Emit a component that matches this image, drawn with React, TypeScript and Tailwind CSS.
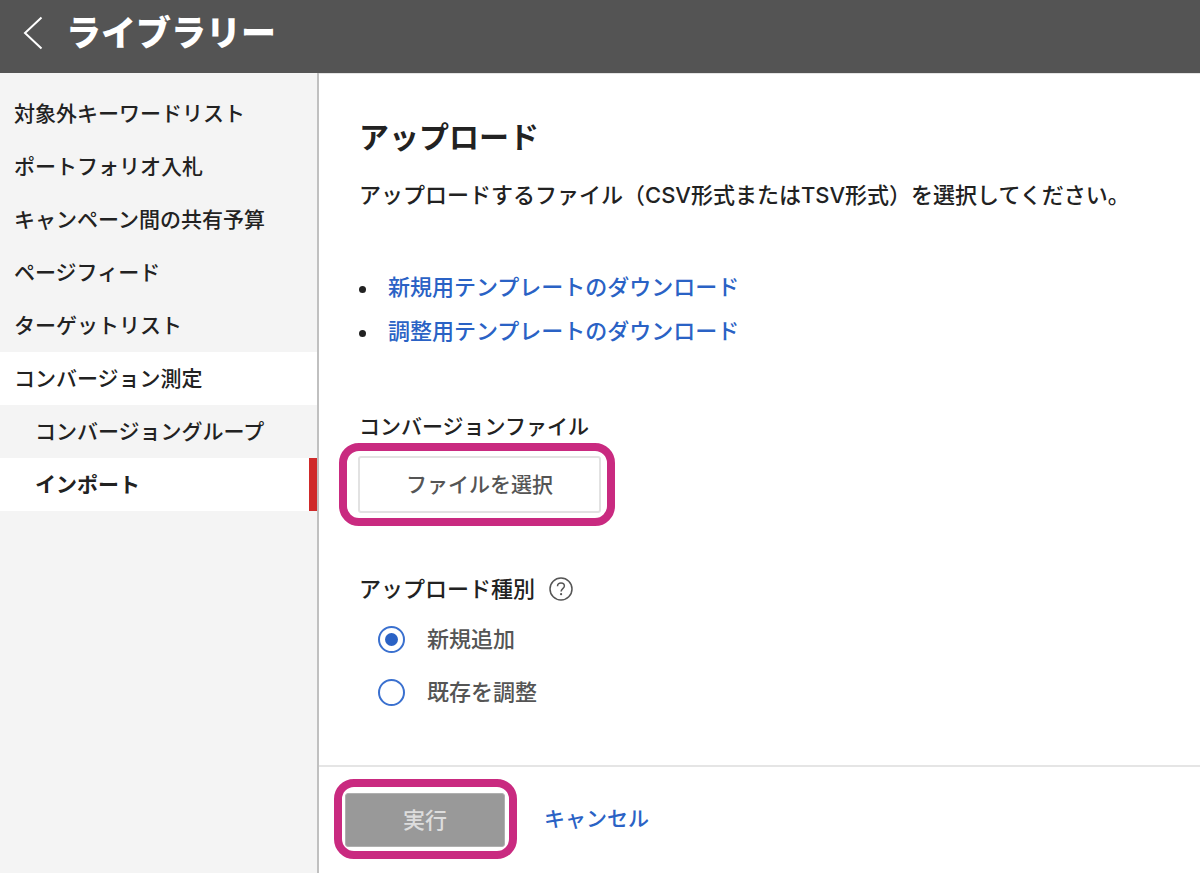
import { useRef, useState } from "react";
import clsx from "clsx";

const NAV_ITEMS = [
    { label: "対象外キーワードリスト" },
    { label: "ポートフォリオ入札" },
    { label: "キャンペーン間の共有予算" },
    { label: "ページフィード" },
    { label: "ターゲットリスト" },
    { label: "コンバージョン測定", open: true },
    { label: "コンバージョングループ", nested: true },
    { label: "インポート", nested: true, current: true },
];

const TEMPLATES = ["新規用テンプレートのダウンロード", "調整用テンプレートのダウンロード"];

const UPLOAD_TYPES = [
    { value: "new", label: "新規追加" },
    { value: "adjust", label: "既存を調整" },
];

function Header() {
    return (
        <header className="flex h-[73px] items-center bg-[#545454] pb-[7px] pl-[22px] text-white">
            <a href="#" aria-label="戻る">
                <svg width="22" height="34" viewBox="0 0 22 34" fill="none" stroke="currentColor" strokeWidth="2">
                    <path d="M19.5 1.5 3 17l16.5 15.5" />
                </svg>
            </a>
            <h1 className="ml-[22px] text-[35px] leading-10 font-black">ライブラリー</h1>
        </header>
    );
}

function Sidebar() {
    return (
        <nav className="w-[319px] shrink-0 border-r-2 border-[#c0c0c0] bg-[#f4f4f4] pt-[14px] text-[21px]">
            <ul>
                {NAV_ITEMS.map((item) => (
                    <li key={item.label}>
                        <a
                            href="#"
                            aria-current={item.current ? "page" : undefined}
                            className={clsx(
                                "flex h-[53px] items-center whitespace-nowrap",
                                item.nested ? "pl-[35px]" : "pl-[14px]",
                                (item.open || item.current) && "bg-white",
                                item.current && "border-r-8 border-[#cf2a2a] font-bold"
                            )}
                        >
                            {item.label}
                        </a>
                    </li>
                ))}
            </ul>
        </nav>
    );
}

function HelpIcon() {
    return (
        <svg width="24" height="24" viewBox="0 0 24 24" fill="none" stroke="#555" strokeWidth="1.5">
            <circle cx="12" cy="12" r="11" />
            <path d="M8.5 9.3c0-2.1 1.5-3.4 3.5-3.4s3.4 1.3 3.4 3.1c0 2.5-3.3 2.8-3.3 5.4" />
            <circle cx="12.1" cy="17.2" r="1.1" fill="#555" stroke="none" />
        </svg>
    );
}

export default function App() {
    const fileInput = useRef<HTMLInputElement>(null);
    const [uploadType, setUploadType] = useState("new");

    return (
        <div className="flex min-h-screen flex-col bg-white font-['Inter','Noto_Sans_CJK_JP',sans-serif] text-[22px] leading-8 font-medium text-[#222]">
            <Header />

            <div className="flex flex-1">
                <Sidebar />

                <main className="flex min-w-0 flex-1 flex-col border-t border-[#e4e4e4]">
                    <div className="flex-1 pt-[43px] pr-6 pb-10 pl-10">
                        <h2 className="text-[30px] leading-10 font-bold">アップロード</h2>
                        <p className="mt-[22px]">
                            アップロードするファイル（CSV形式またはTSV形式）を選択してください。
                        </p>

                        <ul className="mt-[54px] leading-[44px]">
                            {TEMPLATES.map((name) => (
                                <li key={name} className="flex items-center gap-[22px]">
                                    <span className="mt-1 size-[7px] rounded-full bg-[#222]" />
                                    <a href="#" className="text-[#2a62c5]">
                                        {name}
                                    </a>
                                </li>
                            ))}
                        </ul>

                        <label htmlFor="conversion-file" className="mt-[58px] block text-[21px]">
                            コンバージョンファイル
                        </label>
                        <div className="-ml-5 w-fit rounded-[20px] border-8 border-[#c92a80] py-[5px] pr-[6px] pl-[11px]">
                            <button
                                type="button"
                                onClick={() => fileInput.current?.click()}
                                className="h-[57px] w-[243px] rounded-[3px] border-2 border-[#e2e2e2] bg-white text-[21px] text-[#555]"
                            >
                                ファイルを選択
                            </button>
                            <input ref={fileInput} id="conversion-file" type="file" accept=".csv,.tsv" hidden />
                        </div>

                        <fieldset className="mt-[47px]">
                            <legend className="flex items-center gap-[14px]">
                                アップロード種別
                                <button type="button" aria-label="ヘルプ">
                                    <HelpIcon />
                                </button>
                            </legend>
                            <div className="mt-2 pl-[19px]">
                                {UPLOAD_TYPES.map(({ value, label }) => (
                                    <label key={value} className="flex h-[53px] w-fit items-center gap-[22px] pb-px text-[#555]">
                                        <input
                                            type="radio"
                                            name="upload-type"
                                            value={value}
                                            checked={uploadType === value}
                                            onChange={() => setUploadType(value)}
                                            className="grid size-[27px] appearance-none place-content-center rounded-full border-2 border-[#3a70cf] checked:before:size-[13px] checked:before:rounded-full checked:before:bg-[#2a62c5]"
                                        />
                                        {label}
                                    </label>
                                ))}
                            </div>
                        </fieldset>
                    </div>

                    <footer className="flex items-center gap-[27px] border-t-2 border-[#e5e5e5] pt-3 pb-[14px] pl-[15px]">
                        <div className="rounded-[20px] border-8 border-[#c92a80] pt-[6px] pr-1 pb-1 pl-[3px]">
                            <button
                                type="submit"
                                disabled
                                className="block h-[54px] w-[160px] rounded-[3px] border border-[#b0b0b0] bg-[#999] text-[#ddd]"
                            >
                                実行
                            </button>
                        </div>
                        <a href="#" className="text-[21px] text-[#2a62c5]">
                            キャンセル
                        </a>
                    </footer>
                </main>
            </div>
        </div>
    );
}
